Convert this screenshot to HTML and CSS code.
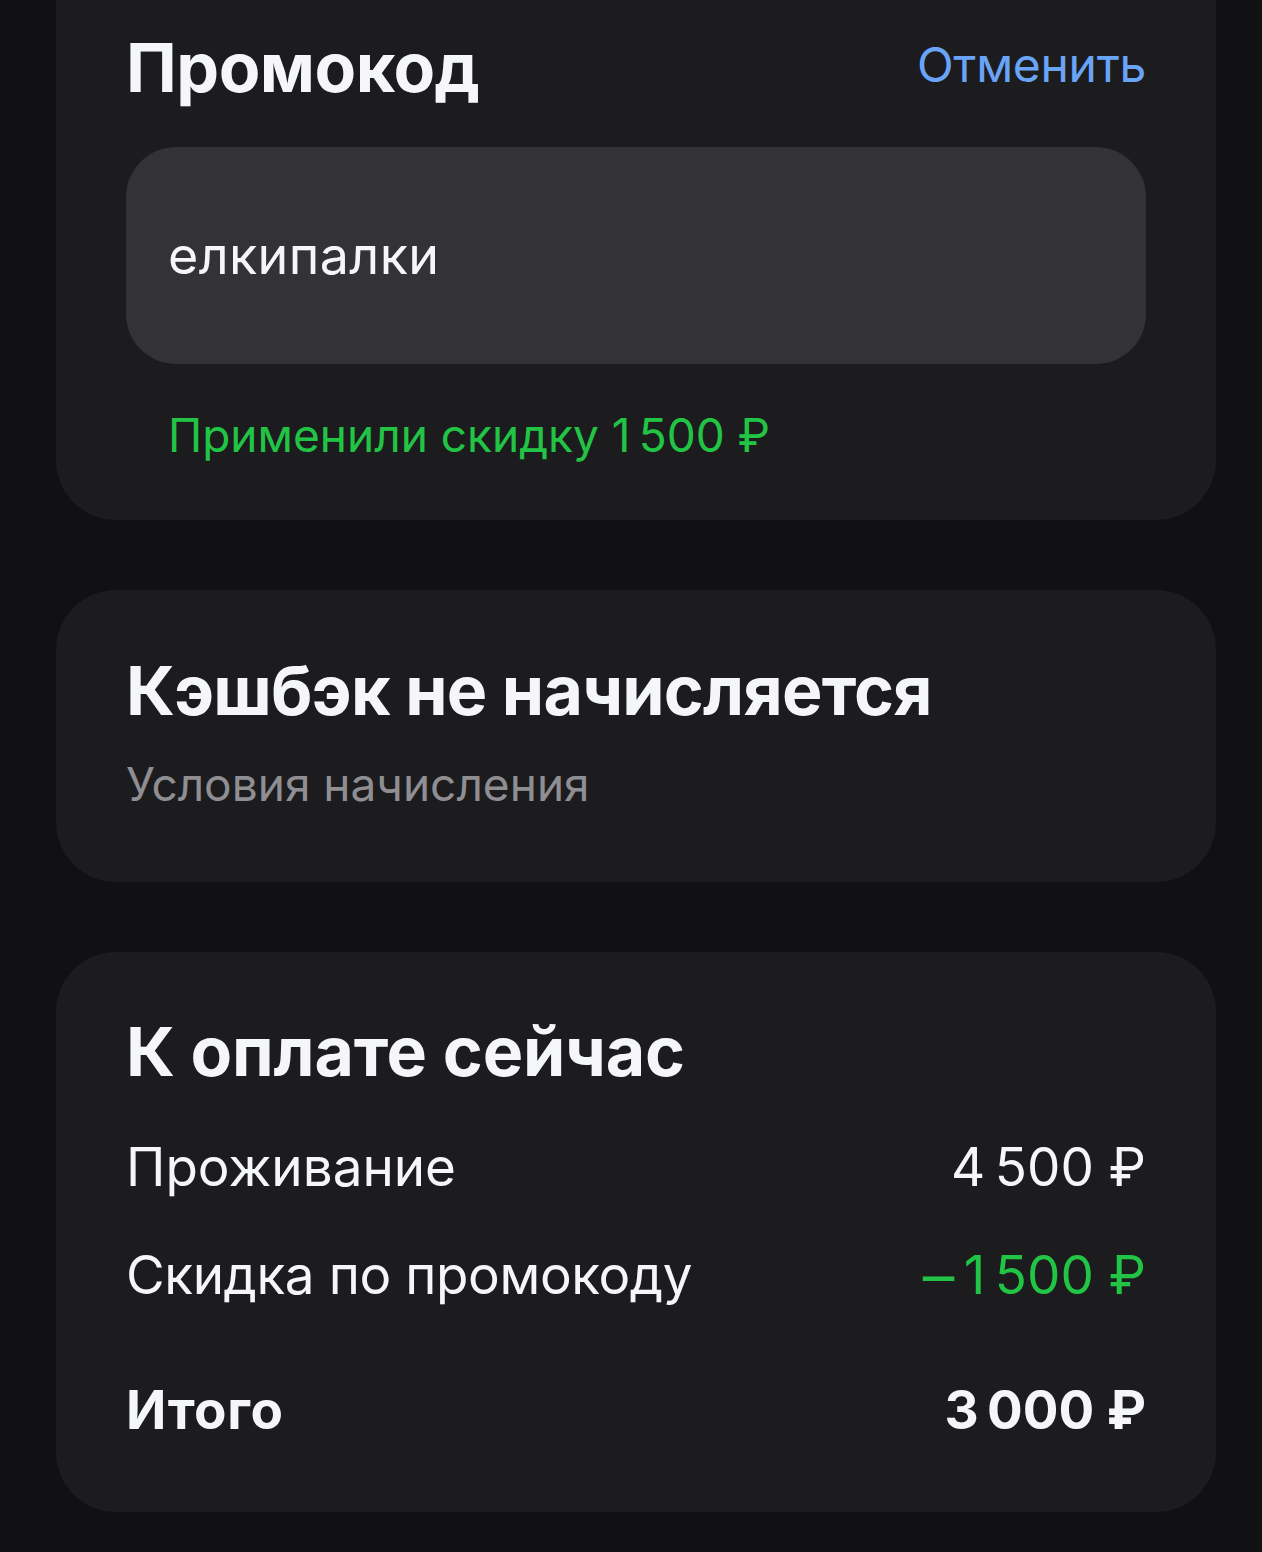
FILE: index.html
```html
<!DOCTYPE html>
<html lang="ru">
<head>
<meta charset="utf-8">
<title>Оплата</title>
<link rel="stylesheet" href="styles.css">
</head>
<body>
<main class="page">
  <section class="card card-promo">
    <div class="promo-head">
      <h2 class="title">Промокод</h2>
      <a class="cancel" href="#">Отменить</a>
    </div>
    <div class="promo-input">елкипалки</div>
    <p class="promo-ok">Применили скидку 1&#8239;500&nbsp;₽</p>
  </section>

  <section class="card card-cashback">
    <h2 class="title">Кэшбэк не начисляется</h2>
    <p class="muted">Условия начисления</p>
  </section>

  <section class="card card-pay">
    <h2 class="title">К оплате сейчас</h2>
    <div class="row first">
      <span>Проживание</span>
      <span>4&#8239;500&nbsp;₽</span>
    </div>
    <div class="row">
      <span>Скидка по промокоду</span>
      <span class="green"><span class="minus">−</span>1&#8239;500&nbsp;₽</span>
    </div>
    <div class="row total">
      <span>Итого</span>
      <span>3&#8239;000&nbsp;₽</span>
    </div>
  </section>
</main>
</body>
</html>
```

FILE: styles.css
```css
html, body {
  margin: 0;
  padding: 0;
  background: #111113;
}
body {
  font-family: "Inter", "Roboto", "Liberation Sans", sans-serif;
  color: #f5f6f8;
  width: 1262px;
  height: 1552px;
  overflow: hidden;
}
.page {
  display: flex;
  flex-direction: column;
  gap: 70px;
  padding: 0 46px 0 56px;
  margin-top: -60px;
}
.card {
  background: #1c1c1e;
  border-radius: 60px;
  padding: 0 70px;
}
.title {
  margin: 0;
  font-size: 68px;
  font-weight: 700;
  line-height: 82px;
  letter-spacing: -0.5px;
}
.card-cashback .title {
  letter-spacing: -0.75px;
}
.card-pay .title {
  letter-spacing: -0.2px;
}
.card-promo {
  padding-top: 86px;
  padding-bottom: 57px;
}
.promo-head {
  display: flex;
  align-items: center;
  justify-content: space-between;
}
.cancel {
  color: #6aa4f7;
  text-decoration: none;
  font-size: 48px;
  line-height: 58px;
  margin-top: -4px;
  letter-spacing: -0.3px;
}
.promo-input {
  margin-top: 39px;
  height: 217px;
  border-radius: 50px;
  background: #333335;
  display: flex;
  align-items: center;
  padding-left: 42px;
  font-size: 52px;
  letter-spacing: 0.4px;
}
.promo-ok {
  margin: 44px 0 0;
  padding-left: 42px;
  color: #22c445;
  font-size: 46px;
  line-height: 55px;
}
.card-cashback {
  padding-top: 59px;
  padding-bottom: 70px;
}
.muted {
  margin: 26px 0 0;
  color: #8e8e93;
  font-size: 46px;
  line-height: 55px;
}
.card-pay {
  padding-top: 58px;
  padding-bottom: 69px;
}
.row {
  display: flex;
  justify-content: space-between;
  font-size: 53px;
  line-height: 65px;
  margin-top: 43px;
  letter-spacing: -0.4px;
}
.row.first span:first-child {
  letter-spacing: 0;
}
.row.first span:last-child {
  letter-spacing: 0.4px;
}
.row.total {
  margin-top: 70px;
  font-weight: 700;
  letter-spacing: 0.6px;
}
.green {
  color: #22c445;
}
.minus {
  display: inline-block;
  transform: scaleX(1.3);
  margin-right: 8px;
}
```
